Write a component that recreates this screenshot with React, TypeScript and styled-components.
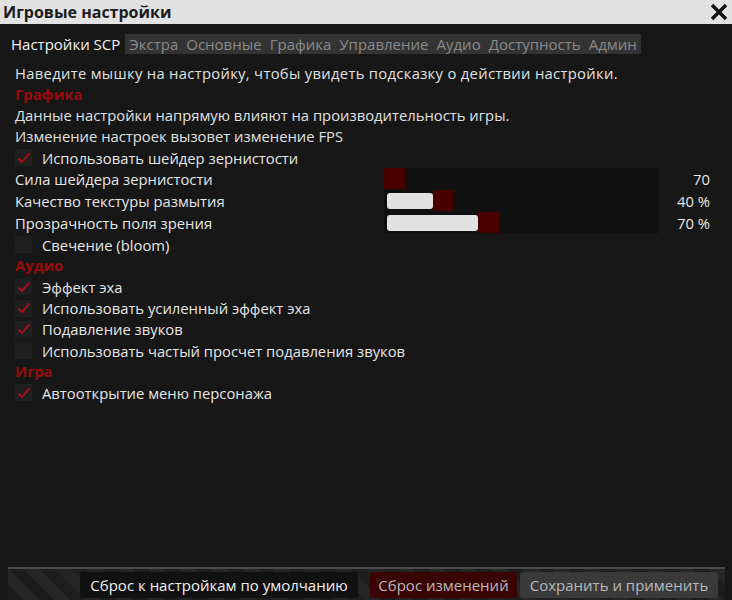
import styled, { createGlobalStyle } from "styled-components";

const GlobalStyle = createGlobalStyle`
  html, body {
    margin: 0;
    padding: 0;
    background: #171717;
  }
  body {
    font-family: "Open Sans", "Noto Sans", sans-serif;
  }
`;

const Window = styled.div`
  display: flex;
  flex-direction: column;
  width: 732px;
  height: 600px;
  background: #171717;
  overflow: hidden;
`;

const TitleBar = styled.div`
  display: flex;
  align-items: center;
  justify-content: space-between;
  height: 24px;
  padding: 0 2px 0 3px;
  background: #e2e2e2;
`;

const Title = styled.div`
  font-size: 16px;
  font-weight: 700;
  color: #1c1c1c;
`;

const CloseButton = styled.div`
  display: flex;
  align-items: center;
  justify-content: center;
  width: 22px;
  height: 22px;
`;

const TabBar = styled.div`
  display: flex;
  align-items: stretch;
  height: 20px;
  margin: 10px 0 0 8px;
`;

const Tab = styled.div<{ $active?: boolean }>`
  display: flex;
  align-items: center;
  padding: 0 ${(p) => (p.$active ? "3px" : "4px")};
  font-size: 15px;
  color: ${(p) => (p.$active ? "#f2f2f2" : "#8a8a8a")};
  background: ${(p) => (p.$active ? "transparent" : "#333333")};
  margin-right: ${(p) => (p.$active ? "2px" : "0")};
`;

const Content = styled.div`
  display: flex;
  flex-direction: column;
  flex: 1;
  padding: 9px 22px 0 15px;
`;

const Line = styled.div`
  height: 21px;
  line-height: 21px;
  font-size: 14.8px;
  color: #e0e0e0;
  white-space: nowrap;
`;

const Hint = styled(Line)`
  letter-spacing: 0.3px;
`;

const Section = styled(Line)`
  font-weight: 700;
  color: #9a0b0b;
`;

const CheckRow = styled.div`
  display: flex;
  align-items: center;
  gap: 10px;
  height: 21.2px;
  font-size: 14.8px;
  color: #e6e6e6;
  white-space: nowrap;
`;

const Box = styled.div`
  display: flex;
  align-items: center;
  justify-content: center;
  width: 17px;
  height: 17px;
  background: #1f1f1f;
`;

const SliderRow = styled.div`
  display: grid;
  grid-template-columns: 369px 274px 1fr;
  align-items: center;
  height: 22px;
  font-size: 14.8px;
  color: #e6e6e6;
`;

const Track = styled.div`
  position: relative;
  height: 22px;
  background: #101010;
`;

const Fill = styled.div`
  position: absolute;
  left: 3px;
  top: 3px;
  height: 16px;
  background: #e2e2e2;
  border-radius: 3px;
`;

const Thumb = styled.div`
  position: absolute;
  top: 0;
  width: 21px;
  height: 21px;
  background: #4b0000;
`;

const Value = styled.div`
  text-align: right;
`;

const Footer = styled.div`
  display: flex;
  justify-content: flex-end;
  align-items: center;
  margin: 0 7px 0 8px;
  padding: 3px 7px 2px 0;
  border-top: 2px solid #4a4a4a;
  background: repeating-linear-gradient(
    45deg,
    #1d1d1d 0 11px,
    #252525 11px 22px
  );
`;

const Button = styled.div<{ $tone: "black" | "red" | "gray"; $w: number }>`
  display: flex;
  align-items: center;
  justify-content: center;
  width: ${(p) => p.$w}px;
  height: 26px;
  font-size: 15px;
  border-radius: 3px;
  color: ${(p) => (p.$tone === "black" ? "#f0f0f0" : "#b8b8b8")};
  background: ${(p) =>
    p.$tone === "black" ? "#111111" : p.$tone === "red" ? "#3a0404" : "#3a3a3a"};
  margin-left: ${(p) => (p.$tone === "red" ? "12px" : p.$tone === "gray" ? "3px" : "0")};
`;

const Check = () => (
  <svg width="14" height="12" viewBox="0 0 14 12">
    <path d="M1.5 6.5 L5 10 L12.5 1.5" fill="none" stroke="#a3111a" strokeWidth="2" />
  </svg>
);

const CheckItem = ({ label, checked }: { label: string; checked: boolean }) => (
  <CheckRow>
    <Box>{checked && <Check />}</Box>
    {label}
  </CheckRow>
);

const Slider = ({ label, pct, value }: { label: string; pct: number; value: string }) => {
  const fillW = pct > 0 ? (pct / 100) * 115 : 0;
  return (
    <SliderRow>
      <div>{label}</div>
      <Track>
        {fillW > 0 && <Fill style={{ width: fillW }} />}
        <Thumb style={{ left: fillW > 0 ? fillW + 3 : 0 }} />
      </Track>
      <Value>{value}</Value>
    </SliderRow>
  );
};

const tabs = ["Экстра", "Основные", "Графика", "Управление", "Аудио", "Доступность", "Админ"];

export default function App() {
  return (
    <>
      <GlobalStyle />
      <Window>
        <TitleBar>
          <Title>Игровые настройки</Title>
          <CloseButton>
            <svg width="20" height="20" viewBox="0 0 20 20">
              <path d="M3 3 L17 17 M17 3 L3 17" stroke="#111" strokeWidth="3.4" />
            </svg>
          </CloseButton>
        </TitleBar>
        <TabBar>
          <Tab $active>Настройки SCP</Tab>
          {tabs.map((t) => (
            <Tab key={t}>{t}</Tab>
          ))}
        </TabBar>
        <Content>
          <Hint>Наведите мышку на настройку, чтобы увидеть подсказку о действии настройки.</Hint>
          <Section>Графика</Section>
          <Line>Данные настройки напрямую влияют на производительность игры.</Line>
          <Line>Изменение настроек вызовет изменение FPS</Line>
          <CheckItem label="Использовать шейдер зернистости" checked />
          <Slider label="Сила шейдера зернистости" pct={0} value="70" />
          <Slider label="Качество текстуры размытия" pct={40} value="40 %" />
          <Slider label="Прозрачность поля зрения" pct={79} value="70 %" />
          <CheckItem label="Свечение (bloom)" checked={false} />
          <Section>Аудио</Section>
          <CheckItem label="Эффект эха" checked />
          <CheckItem label="Использовать усиленный эффект эха" checked />
          <CheckItem label="Подавление звуков" checked />
          <CheckItem label="Использовать частый просчет подавления звуков" checked={false} />
          <Section>Игра</Section>
          <CheckItem label="Автооткрытие меню персонажа" checked />
        </Content>
        <Footer>
          <Button $tone="black" $w={278}>Сброс к настройкам по умолчанию</Button>
          <Button $tone="red" $w={147}>Сброс изменений</Button>
          <Button $tone="gray" $w={198}>Сохранить и применить</Button>
        </Footer>
      </Window>
    </>
  );
}
